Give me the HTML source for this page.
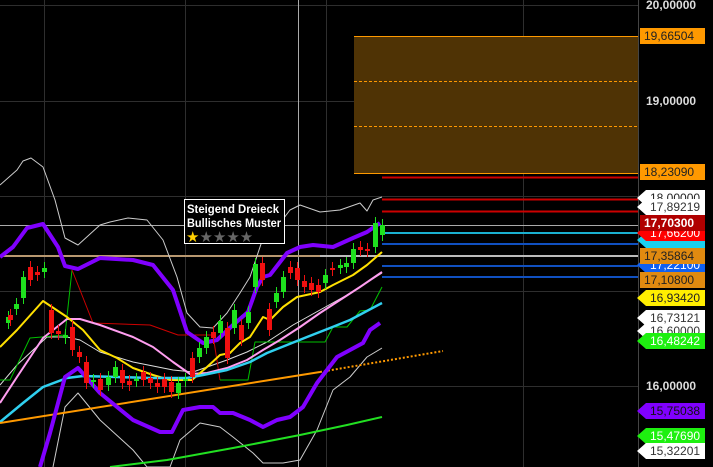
<!DOCTYPE html>
<html><head><meta charset="utf-8"><style>
html,body{margin:0;padding:0;background:#000;width:713px;height:467px;overflow:hidden}
svg{display:block}
text{font-family:"Liberation Sans",sans-serif}
</style></head><body>
<svg id="s" width="713" height="467" viewBox="0 0 713 467" xmlns="http://www.w3.org/2000/svg">
<rect width="713" height="467" fill="#000"/>
<g stroke="#2e2e2e" stroke-width="1">
<line x1="0" y1="5.5" x2="638" y2="5.5"/><line x1="0" y1="101.5" x2="638" y2="101.5"/>
<line x1="0" y1="196.5" x2="638" y2="196.5"/><line x1="0" y1="291.5" x2="638" y2="291.5"/>
<line x1="0" y1="386.5" x2="638" y2="386.5"/>
<line x1="44.5" y1="0" x2="44.5" y2="467"/><line x1="185.5" y1="0" x2="185.5" y2="467"/>
<line x1="326.5" y1="0" x2="326.5" y2="467"/><line x1="523.5" y1="0" x2="523.5" y2="467"/>
</g>
<line x1="298.5" y1="0" x2="298.5" y2="467" stroke="#aaa"/>
<line x1="638.5" y1="0" x2="638.5" y2="467" stroke="#444"/>
<rect x="354" y="36" width="284" height="137" fill="#4f3305"/>
<line x1="354" y1="36.5" x2="638" y2="36.5" stroke="#f90"/>
<line x1="354" y1="173.5" x2="638" y2="173.5" stroke="#f90"/>
<line x1="354" y1="81.5" x2="638" y2="81.5" stroke="#f90" stroke-dasharray="3,2"/>
<line x1="354" y1="126.5" x2="638" y2="126.5" stroke="#f90" stroke-dasharray="3,2"/>
<g stroke-width="2">
<line x1="382" y1="177.5" x2="638" y2="177.5" stroke="#c00"/>
<line x1="382" y1="199.5" x2="638" y2="199.5" stroke="#c00"/>
<line x1="382" y1="211.5" x2="638" y2="211.5" stroke="#c00"/>
<line x1="382" y1="233" x2="638" y2="233" stroke="#1ab0d0"/>
<line x1="382" y1="244" x2="638" y2="244" stroke="#1050c0"/>
<line x1="382" y1="266" x2="638" y2="266" stroke="#1050c0"/>
<line x1="382" y1="277" x2="638" y2="277" stroke="#1050c0"/>
</g>
<line x1="0" y1="225.5" x2="638" y2="225.5" stroke="#aaa"/>
<line x1="0" y1="256" x2="320" y2="256" stroke="#b89870" stroke-width="2"/>
<line x1="320" y1="256" x2="638" y2="256" stroke="#bbb" stroke-width="2"/>
<g fill="none" stroke-linejoin="round">
<polyline stroke="#ccc" stroke-width="1" points="0,185 17,170 23,161 31,158 43,167 55,200 65,238 78,245 100,225 110,222 128,218 147,220 163,240 177,277 187,313 200,327 213,328 227,313 240,293 250,277 263,238 277,227 290,210 300,205 320,212 340,210 360,203 367,211 373,200 382,197"/>
<polyline stroke="#ccc" stroke-width="1" points="53,467 65,407 78,393 100,420 133,450 147,467 170,467 180,440 200,423 220,427 233,437 253,453 263,463 283,463 300,460 317,430 333,390 350,377 367,357 382,348"/>
<polyline stroke="#ddd" stroke-width="1" points="0,385 17,365 47,337 67,337 80,340 100,352 133,362 173,370 193,372 227,360 247,352 267,342 293,325 320,310 347,295 382,273"/>
<polyline stroke="#00c000" stroke-width="1" points="0,380 10,380 30,338 65,335 72,270"/>
<polyline stroke="#c00" stroke-width="1" points="72,270 80,290 93,323 150,325 178,335 213,335 220,380"/>
<polyline stroke="#00c000" stroke-width="1" points="220,380 248,380 255,342 325,342 333,327 347,327 360,311 370,310 382,287"/>
<polyline stroke="#ff9ef0" stroke-width="2" points="0,403 17,377 43,338 67,319 80,319 100,325 133,337 153,347 173,362 190,374 207,373 227,368 247,360 263,350 280,340 300,327 320,313 340,300 360,287 382,272"/>
<polyline stroke="#ffe000" stroke-width="2" points="0,347 17,330 43,301 67,317 83,330 100,350 117,358 133,368 153,375 170,380 192,380 207,367 220,355 230,353 240,343 250,337 263,317 270,320 283,307 297,297 320,292 333,285 353,275 367,265 382,252"/>
<polyline stroke="#30d0f0" stroke-width="2.5" points="0,422 23,403 43,387 67,378 83,376 117,377 150,378 187,378 203,375 227,370 250,362 267,353 287,345 307,337 330,328 350,320 382,303"/>
<line x1="0" y1="423" x2="320" y2="372" stroke="#f90" stroke-width="2"/>
<line x1="320" y1="372" x2="443" y2="351" stroke="#f90" stroke-width="2" stroke-dasharray="2,2"/>
<polyline stroke="#22e022" stroke-width="2" points="110,467 167,460 233,448 300,435 347,425 382,417"/>
<polyline stroke="#8000ff" stroke-width="4" points="0,257 13,247 27,228 43,224 58,247 65,266 78,269 100,258 133,260 153,265 173,290 187,332 203,343 217,340 233,325 248,312 257,287 263,277 270,275 287,253 300,247 313,245 333,247 353,238 367,232 380,223"/>
<polyline stroke="#8000ff" stroke-width="4" points="40,467 50,433 65,377 78,368 100,393 133,420 160,432 172,432 183,410 200,407 213,407 220,413 233,413 250,420 263,427 277,420 290,417 303,407 317,383 337,357 350,350 363,343 370,330 380,323"/>
</g>
<g id="c"></g>
<rect x="184.5" y="199.5" width="100" height="44" fill="#000" stroke="#fff"/>
<text x="187" y="213" fill="#fff" font-size="12" font-weight="bold" textLength="92" lengthAdjust="spacingAndGlyphs">Steigend Dreieck</text>
<text x="187" y="227" fill="#fff" font-size="12" font-weight="bold" textLength="94" lengthAdjust="spacingAndGlyphs">Bullisches Muster</text>
<text x="186" y="242" font-size="15" fill="#ffd000">★<tspan fill="#666">★★★★</tspan></text>
<g id="lab" font-size="12"></g>
</svg>
<script>
var ns="http://www.w3.org/2000/svg",c=document.getElementById('c');
var cd=[[8,317,323,1],[10,315,320,0],[16,304,309,1],[23,277,298,1],[30,267,280,0],[37,272,275,0],[44,268,272,1],[51,310,333,0],[58,331,334,0],[65,335,338,1],[72,327,350,0],[79,352,357,0],[86,362,383,0],[93,380,382,1],[100,379,390,0],[108,377,385,1],[115,367,377,1],[122,370,383,0],[129,381,385,0],[136,379,381,1],[143,372,380,0],[150,378,383,0],[157,383,387,0],[164,379,387,0],[171,382,392,0],[178,383,393,1],[185,379,381,1],[192,358,377,0],[199,348,357,1],[206,337,348,1],[213,332,338,0],[220,321,333,1],[227,328,358,0],[234,310,328,1],[241,325,340,0],[248,312,323,1],[255,264,287,1],[262,263,280,0],[269,309,330,0],[276,293,302,1],[283,277,292,1],[290,267,273,0],[297,268,280,0],[304,281,287,0],[311,283,290,0],[318,285,292,0],[325,275,283,1],[332,268,270,0],[340,265,268,1],[346,263,267,1],[353,249,263,1],[360,247,250,0],[367,249,251,0],[375,223,247,1],[382,225,235,1]];
cd.forEach(function(d){var col=d[3]?'#1ee01e':'#f01010';var l=document.createElementNS(ns,'line');l.setAttribute('x1',d[0]+.5);l.setAttribute('x2',d[0]+.5);l.setAttribute('y1',d[1]-6);l.setAttribute('y2',d[2]+6);l.setAttribute('stroke',col);c.appendChild(l);var r=document.createElementNS(ns,'rect');r.setAttribute('x',d[0]-2);r.setAttribute('y',d[1]);r.setAttribute('width',5);r.setAttribute('height',Math.max(2,d[2]-d[1]));r.setAttribute('fill',col);c.appendChild(r);});
var g=document.getElementById('lab');
function lab(y,t,bg,fg,ptr,bold){var p=document.createElementNS(ns,'path');var d=ptr?'M637,'+y+' L646,'+(y-8)+' L705,'+(y-8)+' L705,'+(y+8)+' L646,'+(y+8)+' Z':'M640,'+(y-8)+' L705,'+(y-8)+' L705,'+(y+8)+' L640,'+(y+8)+' Z';if(bg){p.setAttribute('d',d);p.setAttribute('fill',bg);g.appendChild(p);}if(!t)return;var tx=document.createElementNS(ns,'text');tx.setAttribute('x',bg?(ptr?650:644):646);tx.setAttribute('y',y+4);tx.setAttribute('fill',fg);if(bold)tx.setAttribute('font-weight','bold');tx.textContent=t;g.appendChild(tx);}
lab(5,'20,00000',null,'#ddd',0,1);lab(101,'19,00000',null,'#ddd',0,1);lab(386,'16,00000',null,'#ddd',0,1);
lab(36,'19,66504','#f90','#222',0,0);lab(172,'18,23090','#f90','#222',0,0);
lab(198,'18,00000','#fff','#222',1,0);lab(207,'17,89219','#fff','#333',1,0);
lab(240,'','#1ad0f0','#fff',1,0);
lab(233,'17,66200','#f00','#fff',1,0);
lab(223,'17,70300','#b00000','#fff',0,1);
lab(265,'17,22100','#1060f0','#fff',1,0);
lab(256,'17,35864','#e08a10','#222',0,0);lab(280,'17,10800','#e08a10','#222',0,0);
lab(298,'16,93420','#ffee00','#222',1,0);lab(331,'16,60000','#fff','#333',1,0);lab(318,'16,73121','#fff','#333',1,0);
lab(341,'16,48242','#1ef010','#fff',1,0);
lab(411,'15,75038','#8000ff','#111',1,0);lab(436,'15,47690','#1ef010','#fff',1,0);lab(451,'15,32201','#fff','#333',1,0);
</script>
</body></html>
